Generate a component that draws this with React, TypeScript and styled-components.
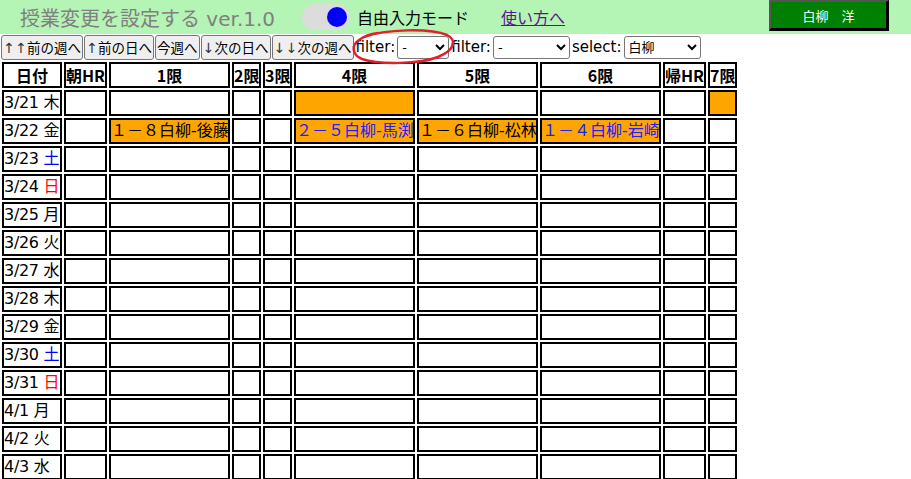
import React from "react";
import styled, { createGlobalStyle } from "styled-components";

const Global = createGlobalStyle`
  html, body { margin: 0; padding: 0; overflow: hidden; background: #fff; }
  body { font-family: "DejaVu Sans", "Noto Sans CJK JP", sans-serif; color: #000; }
  * { box-sizing: border-box; }
`;

const Header = styled.header`
  display: flex;
  align-items: center;
  height: 34px;
  background: #b4f4b4;
  padding-left: 20px;
  padding-right: 22px;
`;

const Title = styled.h1`
  margin: 0;
  font-size: 20px;
  font-weight: normal;
  color: #808080;
  white-space: nowrap;
`;

const Toggle = styled.div`
  margin-left: 27px;
  width: 48px;
  height: 26px;
  border-radius: 13px;
  background: #dcdcdc;
  display: flex;
  align-items: center;
  justify-content: flex-end;
  padding-right: 3px;
`;

const Knob = styled.span`
  width: 20px;
  height: 20px;
  border-radius: 50%;
  background: #0000ff;
`;

const ModeLabel = styled.span`
  margin-left: 7px;
  font-size: 16px;
`;

const HelpLink = styled.a`
  margin-left: 32px;
  font-size: 16px;
  color: #551a8b;
  text-decoration: underline;
`;

const UserButton = styled.button`
  margin-left: auto;
  align-self: flex-start;
  width: 120px;
  height: 31px;
  background: #008000;
  color: #fff;
  font-family: "Noto Sans CJK JP", sans-serif;
  font-size: 13px;
  border-style: solid;
  border-width: 2px 3px 3px 2px;
  border-color: #555 #000 #000 #555;
  padding: 0;
`;

const Toolbar = styled.div`
  position: relative;
  display: flex;
  align-items: center;
  height: 26px;
  padding-left: 1px;
`;

const NavButton = styled.button`
  height: 25px;
  margin-right: 1px;
  padding: 0 1px;
  font-family: "DejaVu Sans", "Noto Sans CJK JP", sans-serif;
  font-size: 13.5px;
  background: #efefef;
  border: 1px solid #767676;
  border-radius: 3px;
  color: #000;
  white-space: nowrap;
`;

const Arrow = styled.span`
  color: #333;
  font-size: 14px;
  display: inline-block;
  width: 12px;
  text-align: center;
`;

const FilterLabel = styled.span<{ $gap: number }>`
  margin-left: ${(p) => p.$gap}px;
  font-size: 15px;
  white-space: nowrap;
`;

const Select = styled.select<{ $w: number }>`
  width: ${(p) => p.$w}px;
  height: 23px;
  margin-left: 2px;
  font-family: "DejaVu Sans", "Noto Sans CJK JP", sans-serif;
  font-size: 13px;
  border: 1px solid #767676;
  border-radius: 3px;
  background: #fff;
  color: #000;
`;

const Scribble = styled.svg`
  position: absolute;
  left: 350px;
  top: -6px;
  width: 108px;
  height: 40px;
  pointer-events: none;
  overflow: visible;
`;

const Table = styled.table`
  border-collapse: separate;
  border-spacing: 2px;
  table-layout: fixed;
  width: 739px;
`;

const Th = styled.th<{ $w: number }>`
  width: ${(p) => p.$w}px;
  height: 26px;
  border: 2px solid #000;
  padding: 0;
  font-family: "Noto Sans CJK JP", sans-serif;
  font-weight: bold;
  font-size: 16px;
  line-height: 22px;
  text-align: center;
  white-space: nowrap;
  overflow: hidden;
`;

const Td = styled.td<{ $filled?: boolean; $blue?: boolean }>`
  height: 26px;
  border: 2px solid #000;
  padding: 0;
  font-size: 16px;
  line-height: 22px;
  white-space: nowrap;
  overflow: hidden;
  background: ${(p) => (p.$filled ? "#ffa500" : "#fff")};
  color: ${(p) => (p.$blue ? "#2020ff" : "#000")};
`;

const DateCell = styled(Td)`
  letter-spacing: -0.3px;
`;

const Dow = styled.span<{ $c: string }>`
  color: ${(p) => p.$c};
  letter-spacing: 0;
`;

const columns: { label: string; w: number }[] = [
  { label: "日付", w: 60 },
  { label: "朝HR", w: 43 },
  { label: "1限", w: 121 },
  { label: "2限", w: 29 },
  { label: "3限", w: 29 },
  { label: "4限", w: 121 },
  { label: "5限", w: 121 },
  { label: "6限", w: 121 },
  { label: "帰HR", w: 43 },
  { label: "7限", w: 29 },
];

const days: [string, string][] = [
  ["3/21", "木"],
  ["3/22", "金"],
  ["3/23", "土"],
  ["3/24", "日"],
  ["3/25", "月"],
  ["3/26", "火"],
  ["3/27", "水"],
  ["3/28", "木"],
  ["3/29", "金"],
  ["3/30", "土"],
  ["3/31", "日"],
  ["4/1", "月"],
  ["4/2", "火"],
  ["4/3", "水"],
];

type Lesson = { text: string; blue?: boolean };
const lessons: Record<string, Lesson> = {
  "0-5": { text: "" },
  "0-9": { text: "" },
  "1-2": { text: "１－８白柳-後藤" },
  "1-5": { text: "２－５白柳-馬渕", blue: true },
  "1-6": { text: "１－６白柳-松林" },
  "1-7": { text: "１－４白柳-岩崎", blue: true },
};

const dowColor = (d: string) => (d === "土" ? "#0000ff" : d === "日" ? "#ff0000" : "#000");

export default function App() {
  return (
    <>
      <Global />
      <Header>
        <Title>授業変更を設定する ver.1.0</Title>
        <Toggle>
          <Knob />
        </Toggle>
        <ModeLabel>自由入力モード</ModeLabel>
        <HelpLink href="#">使い方へ</HelpLink>
        <UserButton>白柳　洋</UserButton>
      </Header>
      <Toolbar>
        <NavButton><Arrow>↑</Arrow><Arrow>↑</Arrow>前の週へ</NavButton>
        <NavButton><Arrow>↑</Arrow>前の日へ</NavButton>
        <NavButton>今週へ</NavButton>
        <NavButton><Arrow>↓</Arrow>次の日へ</NavButton>
        <NavButton><Arrow>↓</Arrow><Arrow>↓</Arrow>次の週へ</NavButton>
        <FilterLabel $gap={1}>filter:</FilterLabel>
        <Select $w={52} defaultValue="-">
          <option>-</option>
        </Select>
        <FilterLabel $gap={2}>filter:</FilterLabel>
        <Select $w={77} defaultValue="-">
          <option>-</option>
        </Select>
        <FilterLabel $gap={2}>select:</FilterLabel>
        <Select $w={77} defaultValue="白柳">
          <option>白柳</option>
        </Select>
        <Scribble viewBox="0 0 108 40">
          <path
            d="M 14 9 C 35 1, 80 0, 97 7 C 107 12, 105 22, 88 29 C 70 36, 30 37, 12 31 C 2 27, 1 17, 9 12 C 13 9, 20 6, 28 5"
            fill="none"
            stroke="#e3202a"
            strokeWidth="2.5"
            strokeLinecap="round"
          />
        </Scribble>
      </Toolbar>
      <Table>
        <thead>
          <tr>
            {columns.map((c) => (
              <Th key={c.label} $w={c.w}>{c.label}</Th>
            ))}
          </tr>
        </thead>
        <tbody>
          {days.map(([date, dow], r) => (
            <tr key={date}>
              <DateCell>
                {date} <Dow $c={dowColor(dow)}>{dow}</Dow>
              </DateCell>
              {columns.slice(1).map((c, i) => {
                const l = lessons[`${r}-${i + 1}`];
                return (
                  <Td key={c.label} $filled={!!l} $blue={l?.blue}>
                    {l?.text}
                  </Td>
                );
              })}
            </tr>
          ))}
        </tbody>
      </Table>
    </>
  );
}
